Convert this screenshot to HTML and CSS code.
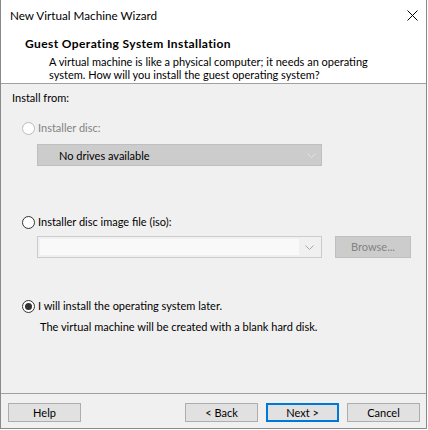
FILE: index.html
```html
<!DOCTYPE html>
<html>
<head>
<meta charset="utf-8">
<link rel="stylesheet" href="styles.css">
</head>
<body>
<div class="window">
  <div class="header">
    <div class="titlebar">
      <span class="title">New Virtual Machine Wizard</span>
      <svg class="close" width="11" height="11" viewBox="0 0 11 11"><path d="M0.5 0.5 L10.5 10.5 M10.5 0.5 L0.5 10.5" stroke="#000" stroke-width="1" fill="none"/></svg>
    </div>
    <div class="heading">Guest Operating System Installation</div>
    <div class="desc">A virtual machine is like a physical computer; it needs an operating<br>system. How will you install the guest operating system?</div>
  </div>
  <div class="content">
    <div class="label">Install from:</div>
    <div class="radio disabled r1"><span class="dot"></span><span>Installer disc:</span></div>
    <div class="combo combo-disabled c1">
      <span class="combo-text">No drives available</span>
      <svg class="chev" width="9" height="5" viewBox="0 0 9 5"><path d="M0.5 0.5 L4.5 4.5 L8.5 0.5" stroke="#e2e2e2" fill="none"/></svg>
    </div>
    <div class="radio r2"><span class="dot"></span><span>Installer disc image file (iso):</span></div>
    <div class="iso-row">
      <div class="combo combo-empty">
        <div class="field"></div>
        <svg class="chev" width="9" height="5" viewBox="0 0 9 5"><path d="M0.5 0.5 L4.5 4.5 L8.5 0.5" stroke="#a8a8a8" fill="none"/></svg>
      </div>
      <div class="btn btn-disabled">Browse...</div>
    </div>
    <div class="radio checked r3"><span class="dot"></span><span>I will install the operating system later.</span></div>
    <div class="note">The virtual machine will be created with a blank hard disk.</div>
  </div>
  <div class="footer">
    <div class="btn">Help</div>
    <div class="spacer"></div>
    <div class="btn">&lt; Back</div>
    <div class="btn btn-default">Next &gt;</div>
    <div class="btn">Cancel</div>
  </div>
</div>
</body>
</html>
```

FILE: styles.css
```css
html, body {
  margin: 0;
  padding: 0;
  background: #ffffff;
}
body {
  font-family: Lato, "Noto Sans", "DejaVu Sans", sans-serif;
  font-size: 11px;
  color: #000;
}
.window {
  width: 427px;
  height: 429px;
  box-sizing: border-box;
  border-left: 1px solid #8a8a8a;
  border-right: 1px solid #8a8a8a;
  border-bottom: 1px solid #8a8a8a;
  display: flex;
  flex-direction: column;
  background: #f0f0f0;
}
.header {
  background: #ffffff;
  height: 84px;
  box-sizing: border-box;
  border-bottom: 1px solid #a0a0a0;
  flex: none;
}
.titlebar {
  height: 30px;
  display: flex;
  justify-content: space-between;
  align-items: flex-start;
  padding-left: 9px;
}
.title {
  font-size: 11.7px;
  line-height: 30px;
}
.close {
  margin-top: 10px;
  margin-right: 8px;
}
.heading {
  font-weight: bold;
  font-size: 12px;
  letter-spacing: 0.4px;
  line-height: 16px;
  margin-top: 6px;
  padding-left: 24px;
}
.desc {
  line-height: 13px;
  margin-top: 3px;
  padding-left: 48px;
}
.content {
  flex: none;
  height: 309px;
  display: flex;
  flex-direction: column;
  align-items: flex-start;
}
.label {
  line-height: 16px;
  margin-top: 6px;
  margin-left: 11px;
}
.radio {
  display: flex;
  align-items: center;
  line-height: 16px;
  margin-left: 21px;
}
.dot {
  width: 13px;
  height: 13px;
  box-sizing: border-box;
  border: 1px solid #333333;
  border-radius: 50%;
  background: #ffffff;
  margin-right: 3px;
  display: flex;
  align-items: center;
  justify-content: center;
}
.radio.disabled {
  color: #838383;
}
.radio.disabled .dot {
  border-color: #bcbcbc;
}
.radio.checked .dot::after {
  content: "";
  width: 7px;
  height: 7px;
  border-radius: 50%;
  background: #333333;
}
.r1 { margin-top: 14px; }
.r2 { margin-top: 48px; }
.r3 { margin-top: 40px; }
.combo {
  width: 285px;
  height: 22px;
  box-sizing: border-box;
  display: flex;
  align-items: center;
}
.combo-disabled {
  background: #cccccc;
  border: 1px solid #bfbfbf;
  margin-left: 36px;
  margin-top: 8px;
}
.combo-text {
  padding-left: 21px;
  flex: 1;
}
.chev {
  margin-right: 5px;
  margin-left: 6px;
}
.iso-row {
  display: flex;
  margin-left: 36px;
  margin-top: 6px;
  gap: 13px;
}
.combo-empty {
  background: #f0f0f0;
  border: 1px solid #cccccc;
  padding: 2px;
}
.field {
  flex: 1;
  height: 16px;
  background: #f9f9f9;
}
.note {
  line-height: 16px;
  margin-top: 5px;
  margin-left: 39px;
}
.footer {
  flex: none;
  height: 35px;
  box-sizing: border-box;
  border-top: 1px solid #a0a0a0;
  display: flex;
  align-items: flex-start;
  padding: 9px 6px 0 7px;
  gap: 8px;
}
.spacer {
  flex: 1;
}
.btn {
  width: 73px;
  height: 19px;
  box-sizing: border-box;
  background: #e1e1e1;
  border: 1px solid #adadad;
  display: flex;
  align-items: center;
  justify-content: center;
  line-height: 16px;
}
.btn-default {
  border: 2px solid #0078d7;
}
.btn-disabled {
  width: 76px;
  height: 22px;
  background: #cccccc;
  border-color: #bfbfbf;
  color: #838383;
}
```
